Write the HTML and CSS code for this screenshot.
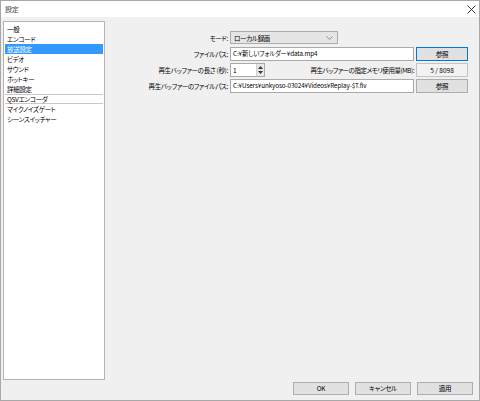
FILE: index.html
```html
<!DOCTYPE html>
<html lang="ja">
<head>
<meta charset="utf-8">
<title>設定</title>
<link rel="stylesheet" href="styles.css">
</head>
<body>
<div class="window">
  <div class="titlebar">
    <span class="title">設定</span>
    <svg class="close" width="9" height="9" viewBox="0 0 9 9"><path d="M0.5 0.5L8.5 8.5M8.5 0.5L0.5 8.5" stroke="#222" stroke-width="0.9" fill="none"/></svg>
  </div>
  <div class="content">
    <ul class="list">
      <li>一般</li>
      <li>エンコード</li>
      <li class="sel">放送設定</li>
      <li>ビデオ</li>
      <li>サウンド</li>
      <li>ホットキー</li>
      <li>詳細設定</li>
      <li class="sep">QSVエンコーダ</li>
      <li>マイクノイズゲート</li>
      <li>シーンスイッチャー</li>
    </ul>
    <div class="form">
      <label class="lbl">モード:</label>
      <div class="combo"><span>ローカル録画</span><svg class="chev" width="7" height="4" viewBox="0 0 7 4"><path d="M0.5 0.5L3.5 3.3L6.5 0.5" stroke="#777" stroke-width="0.8" fill="none"/></svg></div>
      <div></div>

      <label class="lbl">ファイルパス:</label>
      <div class="input">C:¥新しいフォルダー¥data.mp4</div>
      <button class="btn default">参照</button>

      <label class="lbl">再生バッファーの長さ (秒):</label>
      <div class="mid">
        <div class="spin"><span class="spinval">1</span><div class="arrows"><svg width="5" height="3" viewBox="0 0 5 3"><path d="M0 3L2.5 0L5 3Z" fill="#333"/></svg><svg width="5" height="3" viewBox="0 0 5 3"><path d="M0 0L2.5 3L5 0Z" fill="#333"/></svg></div></div>
        <label class="lbl narrow">再生バッファーの指定メモリ使用量(MB):</label>
      </div>
      <div class="valbox">5 / 8098</div>

      <label class="lbl">再生バッファーのファイルパス:</label>
      <div class="input">C:¥Users¥unkyoso-03024¥Videos¥Replay-$T.flv</div>
      <button class="btn">参照</button>
    </div>
  </div>
  <div class="footer">
    <button class="btn foot">OK</button>
    <button class="btn foot">キャンセル</button>
    <button class="btn foot">適用</button>
  </div>
</div>
</body>
</html>
```

FILE: styles.css
```css
* { box-sizing: border-box; }
html, body { margin: 0; padding: 0; }
body {
  font-family: "Noto Sans CJK JP", "Noto Sans", sans-serif;
  font-size: 6.5px;
  letter-spacing: -0.3px;
  font-feature-settings: "palt";
  color: #000;
  background: #fff;
}
.window {
  width: 480px;
  height: 401px;
  border: 1px solid #a8a8a8;
  background: #f0f0f0;
  display: flex;
  flex-direction: column;
}
.titlebar {
  height: 16px;
  background: #fff;
  display: flex;
  align-items: center;
  justify-content: space-between;
  padding: 0 3px 0 4px;
  flex: none;
}
.title { font-size: 7px; color: #444; }
.content {
  flex: 1;
  display: flex;
  padding: 4px 0 0 2px;
  min-height: 0;
}
.list {
  list-style: none;
  margin: 0;
  padding: 2px 1px;
  width: 102px;
  background: #fff;
  border: 1px solid #b4b4b4;
  flex: none;
}
.list li {
  height: 10px;
  line-height: 10px;
  padding-left: 2px;
  white-space: nowrap;
}
.list li.sel { background: #3399ff; color: #fff; }
.list li.sep {
  border-top: 1px solid #c8c8c8;
  border-bottom: 1px solid #c8c8c8;
  height: 10px;
  line-height: 8px;
}
.form {
  flex: 1;
  display: grid;
  grid-template-columns: 123px 184px 52px;
  grid-auto-rows: 14px;
  column-gap: 2px;
  row-gap: 2px;
  align-content: start;
  padding-top: 10px;
}
.lbl {
  text-align: right;
  white-space: nowrap;
  line-height: 14px;
  align-self: center;
}
.lbl.narrow { letter-spacing: -0.45px; }
.combo {
  width: 108px;
  height: 13px;
  background: #e5e5e5;
  border: 1px solid #acacac;
  display: flex;
  align-items: center;
  justify-content: space-between;
  padding: 0 4px 0 3px;
}
.input {
  background: #fff;
  border: 1px solid #a9a9a9;
  height: 14px;
  line-height: 12px;
  padding-left: 2px;
  white-space: nowrap;
  overflow: hidden;
  font-size: 6.3px;
  letter-spacing: -0.1px;
}
.mid {
  display: flex;
  align-items: center;
  justify-content: space-between;
}
.spin {
  width: 35px;
  height: 14px;
  background: #fff;
  border: 1px solid #a9a9a9;
  display: flex;
}
.spinval { flex: 1; padding-left: 2px; line-height: 12px; }
.arrows {
  width: 8px;
  background: #e8e8e8;
  border-left: 1px solid #cfcfcf;
  display: flex;
  flex-direction: column;
  align-items: center;
  justify-content: space-around;
  padding: 1px 0;
}
.arrows svg { display: block; }
.btn {
  font: inherit;
  letter-spacing: inherit;
  font-feature-settings: "palt";
  background: #e1e1e1;
  border: 1px solid #adadad;
  height: 14px;
  padding: 0;
  color: #000;
  line-height: 12px;
}
.btn.default { border-color: #0078d7; }
.valbox {
  background: #f2f2f2;
  border: 1px solid #c4c4c4;
  text-align: center;
  line-height: 12px;
  height: 14px;
  letter-spacing: 0;
}
.footer {
  flex: none;
  display: flex;
  justify-content: flex-end;
  gap: 6px;
  padding: 2px 6px 5px 0;
}
.btn.foot { width: 56px; height: 13px; line-height: 11px; }
```
